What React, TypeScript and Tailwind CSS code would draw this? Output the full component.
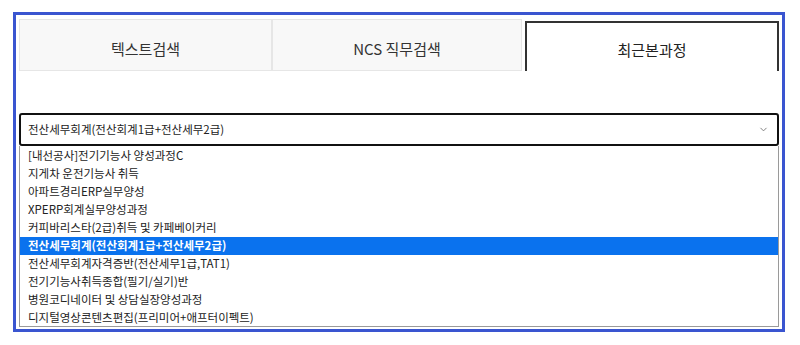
import { ChevronDown } from "lucide-react";

const tabs = ["텍스트검색", "NCS 직무검색", "최근본과정"];

const courses = [
  "[내선공사]전기기능사 양성과정C",
  "지게차 운전기능사 취득",
  "아파트경리ERP실무양성",
  "XPERP회계실무양성과정",
  "커피바리스타(2급)취득 및 카페베이커리",
  "전산세무회계(전산회계1급+전산세무2급)",
  "전산세무회계자격증반(전산세무1급,TAT1)",
  "전기기능사취득종합(필기/실기)반",
  "병원코디네이터 및 상담실장양성과정",
  "디지털영상콘텐츠편집(프리미어+애프터이펙트)",
];

const selected = 5;

export default function App() {
  return (
    <div
      className="w-[800px] h-[345px] bg-white pt-[12px] pl-[13px]"
      style={{ fontFamily: '"Noto Sans CJK KR", "Noto Sans", sans-serif' }}
    >
      <div className="w-[772px] h-[320px] border-[3px] border-[#3a55d0] pt-[4px] px-[3px] bg-white">
        {/* tabs */}
        <div className="grid grid-cols-[253px_250px_1fr] h-[52px]">
          {tabs.map((tab, i) =>
            i === 2 ? (
              <div
                key={tab}
                className="mt-[2px] ml-[3px] border-2 border-b-0 border-[#333] bg-white flex items-center justify-center pt-[6px] text-[15px] text-[#222]"
              >
                {tab}
              </div>
            ) : (
              <div
                key={tab}
                className="border border-[#e6e6e6] bg-[#f8f8f8] flex items-center justify-center pt-[8px] text-[15px] text-[#333]"
              >
                {tab}
              </div>
            ),
          )}
        </div>

        {/* select */}
        <div className="mt-[42px] h-[33px] border-2 border-[#111] rounded-[3px] flex items-center justify-between pl-[7px] pr-[8px] text-[11.5px] text-[#222]">
          <span>{courses[selected]}</span>
          <ChevronDown className="size-[11px] text-[#777]" strokeWidth={2} />
        </div>

        {/* options */}
        <div className="h-[181px] border border-t-0 border-[#9a9a9a] pt-[1px]">
          {courses.map((c, i) => (
            <div
              key={c}
              className={
                i === selected
                  ? "h-[18px] flex items-center pl-[8px] text-[11.5px] font-bold text-white bg-[#0a72ee]"
                  : "h-[18px] flex items-center pl-[8px] text-[11.5px] text-[#222]"
              }
            >
              {c}
            </div>
          ))}
        </div>
      </div>
    </div>
  );
}
